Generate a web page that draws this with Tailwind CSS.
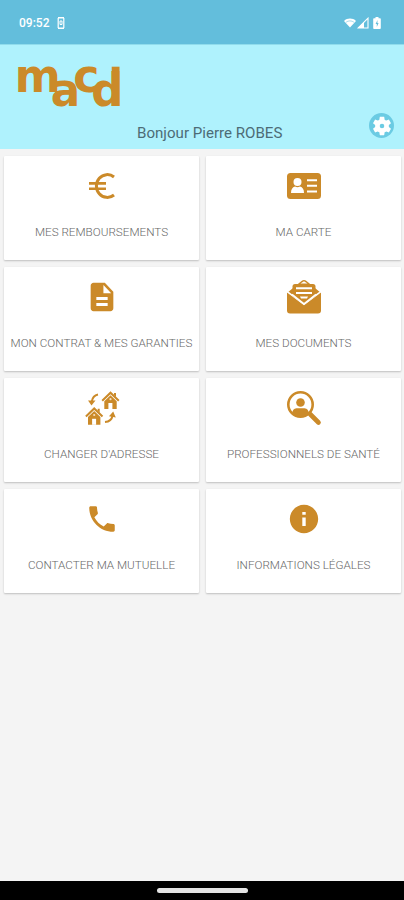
<!DOCTYPE html>
<html lang="fr">
<head>
    <meta charset="UTF-8">
    <meta name="viewport" content="width=device-width, initial-scale=1.0">
    <script src="https://cdn.jsdelivr.net/npm/@tailwindcss/browser@4"></script>
    <title>MACD</title>
</head>
<body class="bg-[#f4f4f4]">
    <div class="flex flex-col w-[404px] h-[900px] overflow-hidden font-[Roboto,sans-serif]">

        <!-- Status bar -->
        <div class="flex items-center justify-between h-[44px] shrink-0 bg-[#63bedc] pt-[2px] pl-[19px] pr-[23px] text-white">
            <div class="flex items-center gap-[8px]">
                <span class="text-[12px] leading-none font-medium">09:52</span>
                <svg class="w-[8px] h-[12px]" viewBox="0 0 8 12" fill="none" stroke="white"><path d="M1 .8h6M1 11.2h6" stroke-width="1.6"/><path d="M1.2 1v10M6.8 1v10" stroke-width="1.2"/><path d="M3 4h2v3.500H3z" stroke-width="1"/></svg>
            </div>
            <div class="flex items-center gap-[1px]">
                <svg class="w-[12px] h-[12px]" viewBox="0 0 13 12" fill="white"><path d="M0 3.800C3.600.4 9.400.4 13 3.800L6.500 11z"/><path d="M2.200 5.200c2.500-2 6.100-2 8.600 0" fill="none" stroke="#63bedc" stroke-width=".6"/></svg>
                <svg class="w-[12px] h-[12px]" viewBox="0 0 12 12"><path d="M1.200 11L11 1.200V11z" fill="none" stroke="white" stroke-width="1.100"/><path d="M1 11l6-6v6z" fill="white"/></svg>
                <svg class="w-[8px] h-[12px] ml-[3px]" viewBox="0 0 8 12" fill="white"><path d="M2.500 0h3v1.200H7q.8 0 .8.800v9q0 1-.8 1H1q-.8 0-.8-1V2q0-.8.800-.8h1.500z"/><path d="M4.500 3L2.600 7h1.200v3l1.800-4H4.400z" fill="#63bedc"/></svg>
            </div>
        </div>

        <!-- Header -->
        <header class="relative flex flex-col h-[105px] shrink-0 bg-[#aff2fd] border-t border-[#90dcec]">
            <svg class="ml-[14px] mt-[15px] w-[112px] h-[50px] overflow-visible" viewBox="14 60 112 50" fill="#cb8a29" font-family="DejaVu Sans" font-weight="700" font-size="46" text-anchor="middle">
                <text transform="translate(37.800 91.500) scale(.96 1)">m</text>
                <text transform="translate(65.600 106) scale(.95 1)">a</text>
                <text transform="translate(86.300 91.500) scale(.96 1)">c</text>
                <text transform="translate(107.200 106) scale(.97 1)">d</text>
                <rect x="111.700" y="66.700" width="7.800" height="39.300"/>
            </svg>
            <p class="ml-[137px] mt-[13px] w-fit text-[15.100px] leading-[20px] text-[#4d6c76] whitespace-nowrap">Bonjour Pierre ROBES</p>
            <a href="#" class="absolute left-[369px] top-[68px] flex items-center justify-center w-[25px] h-[25px] rounded-full bg-[#6bcbe3]">
                <svg class="w-[22px] h-[22px]" viewBox="0 0 24 24" fill="white"><path d="M19.430 12.980c.04-.32.070-.64.070-.98s-.03-.66-.07-.98l2.110-1.650c.19-.15.240-.42.120-.64l-2-3.460c-.12-.22-.39-.3-.61-.22l-2.490 1c-.52-.4-1.080-.73-1.690-.98l-.38-2.650C14.460 2.180 14.250 2 14 2h-4c-.25 0-.46.180-.49.420l-.38 2.650c-.61.250-1.170.590-1.690.980l-2.490-1c-.23-.09-.49 0-.61.220l-2 3.460c-.13.220-.07.490.120.640l2.110 1.650c-.04.320-.07.650-.07.980s.03.660.070.980l-2.110 1.650c-.19.150-.24.420-.12.640l2 3.460c.12.220.39.300.61.220l2.490-1c.52.400 1.080.730 1.690.980l.38 2.650c.03.240.240.420.490.420h4c.25 0 .46-.18.490-.42l.38-2.650c.61-.25 1.170-.59 1.690-.98l2.490 1c.23.090.49 0 .61-.22l2-3.460c.12-.22.070-.49-.12-.64l-2.110-1.650zM12 14.500a2.500 2.500 0 1 1 0-5 2.500 2.500 0 0 1 0 5z"/></svg>
            </a>
        </header>

        <!-- Menu -->
        <main class="grid grid-cols-[195px_195px] auto-rows-[103.500px] gap-x-[7px] gap-y-[7.600px] pl-[4px] pt-[7px] grow content-start text-[11.700px] text-[#686868] font-light">
            <a href="#" class="flex flex-col items-center bg-white rounded-[1px] shadow-[0_1px_2px_rgba(0,0,0,0.22)] pt-[12px]">
                <svg class="w-[36px] h-[36px]" viewBox="0 0 36 36" fill="none" stroke="#cb8a29"><path d="M30 9A10.900 11.400 0 1 0 30 27" stroke-width="3"/><path d="M5 15.400h17M5 20.800h17" stroke-width="2.600"/></svg>
                <span class="mt-[20px] leading-[16px] whitespace-nowrap">MES REMBOURSEMENTS</span>
            </a>
            <a href="#" class="flex flex-col items-center bg-white rounded-[1px] shadow-[0_1px_2px_rgba(0,0,0,0.22)] pt-[12px]">
                <svg class="w-[36px] h-[36px]" viewBox="0 0 36 36"><rect x="1" y="5" width="34" height="26" rx="3.500" fill="#cb8a29"/><g fill="white"><circle cx="11.500" cy="14" r="4"/><path d="M5 25q0-5.500 4-6.500 2.500 1.500 5 0 4 1 4 6.500z"/><path d="M21 11.200h10v2H21zM21 16.800h10v2H21zM21 22.400h10v2H21z"/></g></svg>
                <span class="mt-[20px] leading-[16px] whitespace-nowrap">MA CARTE</span>
            </a>
            <a href="#" class="flex flex-col items-center bg-white rounded-[1px] shadow-[0_1px_2px_rgba(0,0,0,0.22)] pt-[12px]">
                <svg class="w-[34px] h-[36px]" viewBox="0 0 24 24" preserveAspectRatio="none" fill="#cb8a29"><path d="M14 2.500H6c-1.100 0-2 .9-2 2V19.500c0 1.100.890 2 1.990 2H18c1.100 0 2-.9 2-2V8.500l-6-6zm2 15.500H8v-2h8v2zm0-4H8v-2h8v2zm-3-4.500V4l5.500 5.500H13z"/></svg>
                <span class="mt-[20px] leading-[16px] whitespace-nowrap">MON CONTRAT &amp; MES GARANTIES</span>
            </a>
            <a href="#" class="flex flex-col items-center bg-white rounded-[1px] shadow-[0_1px_2px_rgba(0,0,0,0.22)] pt-[12px]">
                <svg class="w-[36px] h-[36px]" viewBox="0 0 36 36"><path d="M1 14L15.500 2q2.500-2 5 0L35 14v17.500q0 3-3 3H4q-3 0-3-3z" fill="#cb8a29"/><path d="M14.500 4.400h7L18 2.200z" fill="white"/><path d="M1.500 12.800L18 25.200 34.500 12.800" fill="none" stroke="white" stroke-width="1.600"/><path d="M6.500 17V7.500q0-2.500 2.500-2.500h18q2.500 0 2.500 2.500V17L18 25z" fill="#cb8a29"/><path d="M6 15.500L18 25 30 15.500" fill="none" stroke="white" stroke-width="1.600"/><path d="M10 8.300h16v2H10zM10 13h16v2H10zM14 17.600h8l-1 1.800h-6z" fill="white"/></svg>
                <span class="mt-[20px] leading-[16px] whitespace-nowrap">MES DOCUMENTS</span>
            </a>
            <a href="#" class="flex flex-col items-center bg-white rounded-[1px] shadow-[0_1px_2px_rgba(0,0,0,0.22)] pt-[12px]">
                <svg class="w-[36px] h-[36px]" viewBox="0 0 36 36" fill="#cb8a29">
                    <g id="house"><path d="M17.500 10L26.500 1.200 35.500 10l-1.400 1.500L26.500 4.300l-7.600 7.200z"/><path d="M20.300 11.200L26.500 5.200l6.200 6V19H20.300z"/><path d="M30 3h2v4l-2-2z"/><path d="M24.400 19v-6h4v6z" fill="white"/><circle cx="26.500" cy="9.200" r="1.100" fill="#f4dfc0"/></g>
                    <use href="#house" x="-16.300" y="15.800"/>
                    <path d="M14 4.500Q8.800 5.500 7.800 11.500" fill="none" stroke="#cb8a29" stroke-width="2"/><path d="M4 10.500h7.500L7.500 15.500z"/>
                    <path d="M21 32Q27.500 31.500 28.600 25.500" fill="none" stroke="#cb8a29" stroke-width="2"/><path d="M25 26.200l4.200-4.700 2.600 6z"/>
                </svg>
                <span class="mt-[20px] leading-[16px] whitespace-nowrap">CHANGER D'ADRESSE</span>
            </a>
            <a href="#" class="flex flex-col items-center bg-white rounded-[1px] shadow-[0_1px_2px_rgba(0,0,0,0.22)] pt-[12px]">
                <svg class="w-[36px] h-[36px]" viewBox="0 0 36 36"><circle cx="14.500" cy="14.500" r="12.200" fill="none" stroke="#cb8a29" stroke-width="2.600"/><path d="M24 24l8.500 8.500" stroke="#cb8a29" stroke-width="4.600" stroke-linecap="round"/><g fill="#cb8a29"><circle cx="14.500" cy="12.500" r="4.300"/><path d="M6 24q.5-5.500 4.500-5.700h8q4 .2 4.500 5.700-8.500 5.500-17 0z"/></g></svg>
                <span class="mt-[20px] leading-[16px] whitespace-nowrap">PROFESSIONNELS DE SANTÉ</span>
            </a>
            <a href="#" class="flex flex-col items-center bg-white rounded-[1px] shadow-[0_1px_2px_rgba(0,0,0,0.22)] pt-[12px]">
                <svg class="w-[34px] h-[36px]" viewBox="0 0 24 24" fill="#cb8a29"><path d="M6.620 10.790c1.440 2.830 3.760 5.140 6.590 6.590l2.200-2.200c.27-.27.670-.36 1.020-.24 1.120.370 2.330.570 3.570.570.55 0 1 .45 1 1V20c0 .55-.45 1-1 1-9.390 0-17-7.610-17-17 0-.55.450-1 1-1h3.500c.55 0 1 .45 1 1 0 1.250.2 2.450.570 3.570.110.350.030.740-.25 1.020l-2.200 2.200z"/></svg>
                <span class="mt-[20px] leading-[16px] whitespace-nowrap">CONTACTER MA MUTUELLE</span>
            </a>
            <a href="#" class="flex flex-col items-center bg-white rounded-[1px] shadow-[0_1px_2px_rgba(0,0,0,0.22)] pt-[12px]">
                <svg class="w-[34px] h-[36px]" viewBox="0 0 24 24" fill="#cb8a29"><path d="M12 2C6.480 2 2 6.480 2 12s4.480 10 10 10 10-4.480 10-10S17.520 2 12 2zm1.200 15h-2.400v-6h2.400v6zm0-8h-2.400V7h2.400v2z"/></svg>
                <span class="mt-[20px] leading-[16px] whitespace-nowrap">INFORMATIONS LÉGALES</span>
            </a>
        </main>

        <!-- Navigation bar -->
        <div class="flex justify-center h-[19px] shrink-0 bg-black pt-[7px]">
            <div class="w-[91px] h-[5px] rounded-full bg-[#e4e4e4]"></div>
        </div>
    </div>
</body>
</html>
